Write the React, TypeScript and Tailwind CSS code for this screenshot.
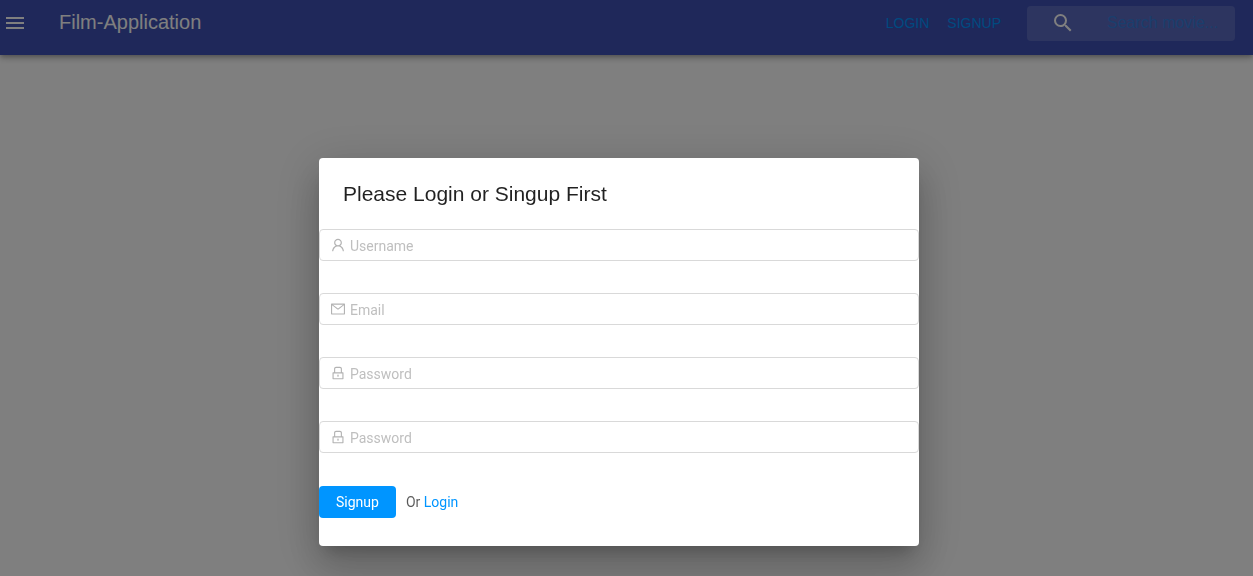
import { useState } from "react";
import type { ReactNode } from "react";
import { MdMenu, MdSearch } from "react-icons/md";
import { AiOutlineLock, AiOutlineMail, AiOutlineUser } from "react-icons/ai";

type FieldProps = {
  id: string;
  type: string;
  label: string;
  icon: ReactNode;
};

function Field({ id, type, label, icon }: FieldProps) {
  const [value, setValue] = useState("");
  return (
    <div className="flex h-8 items-center rounded border border-[#d9d9d9] bg-white pl-[10px] text-sm focus-within:border-[#0095ff]">
      <label htmlFor={id} aria-label={label} className="text-[#b3b3b3]">
        {icon}
      </label>
      <input
        id={id}
        type={type}
        value={value}
        onChange={(e) => setValue(e.target.value)}
        placeholder={label}
        className="min-w-0 flex-1 bg-transparent px-1 pt-[2px] text-black/65 outline-none placeholder:text-[#bfbfbf]"
      />
    </div>
  );
}

function Header() {
  return (
    <header className="flex h-[55px] items-start justify-between bg-[#3f51b5] pr-[18px] font-['Liberation_Sans',Arial,sans-serif] shadow-[0_2px_4px_-1px_rgba(0,0,0,0.2),0_4px_5px_0_rgba(0,0,0,0.14),0_1px_10px_0_rgba(0,0,0,0.12)]">
      <div className="flex h-[46px] items-center gap-8 pl-[3px] text-white">
        <button type="button" aria-label="Menu">
          <MdMenu size={24} />
        </button>
        <h1 className="pb-[2px] text-xl">Film-Application</h1>
      </div>
      <div className="flex h-[46px] items-center">
        <nav className="mr-[26px] flex gap-[18px] text-sm text-[#0095ff]">
          <a href="#login">LOGIN</a>
          <a href="#signup">SIGNUP</a>
        </nav>
        <div className="flex h-[35px] w-[208px] items-center rounded bg-white/15 pl-6 text-white">
          <label htmlFor="search" aria-label="Search">
            <MdSearch size={24} />
          </label>
          <input
            id="search"
            type="search"
            placeholder="Search movie..."
            className="ml-8 min-w-0 flex-1 bg-transparent text-base outline-none placeholder:text-[#0095ff]/45"
          />
        </div>
      </div>
    </header>
  );
}

function SignupDialog() {
  return (
    <section
      role="dialog"
      aria-modal="true"
      aria-labelledby="dialog-title"
      className="w-full max-w-[600px] rounded bg-white pb-7 font-[Roboto,sans-serif] shadow-[0_11px_15px_-7px_rgba(0,0,0,0.2),0_24px_38px_3px_rgba(0,0,0,0.14),0_9px_46px_8px_rgba(0,0,0,0.12)]"
    >
      <h2
        id="dialog-title"
        className="px-6 pt-5 pb-[19px] font-['Liberation_Sans',Arial,sans-serif] text-[21px] leading-8 text-black/87"
      >
        Please Login or Singup First
      </h2>
      <form className="flex flex-col gap-8" onSubmit={(e) => e.preventDefault()}>
        <Field id="username" type="text" label="Username" icon={<AiOutlineUser size={16} />} />
        <Field id="email" type="email" label="Email" icon={<AiOutlineMail size={16} />} />
        <Field id="password" type="password" label="Password" icon={<AiOutlineLock size={16} />} />
        <Field id="confirm" type="password" label="Password" icon={<AiOutlineLock size={16} />} />
        <div className="flex items-center gap-[10px] pt-px text-sm text-black/65">
          <button type="submit" className="h-8 rounded bg-[#0095ff] px-[17px] text-white">
            Signup
          </button>
          <p>
            Or{" "}
            <a href="#login" className="text-[#0095ff]">
              Login
            </a>
          </p>
        </div>
      </form>
    </section>
  );
}

export default function App() {
  return (
    <div className="min-h-screen bg-white">
      <Header />
      <div className="fixed inset-0 flex items-start justify-center overflow-hidden bg-black/50 pt-[158px] pr-[15px]">
        <SignupDialog />
      </div>
    </div>
  );
}
